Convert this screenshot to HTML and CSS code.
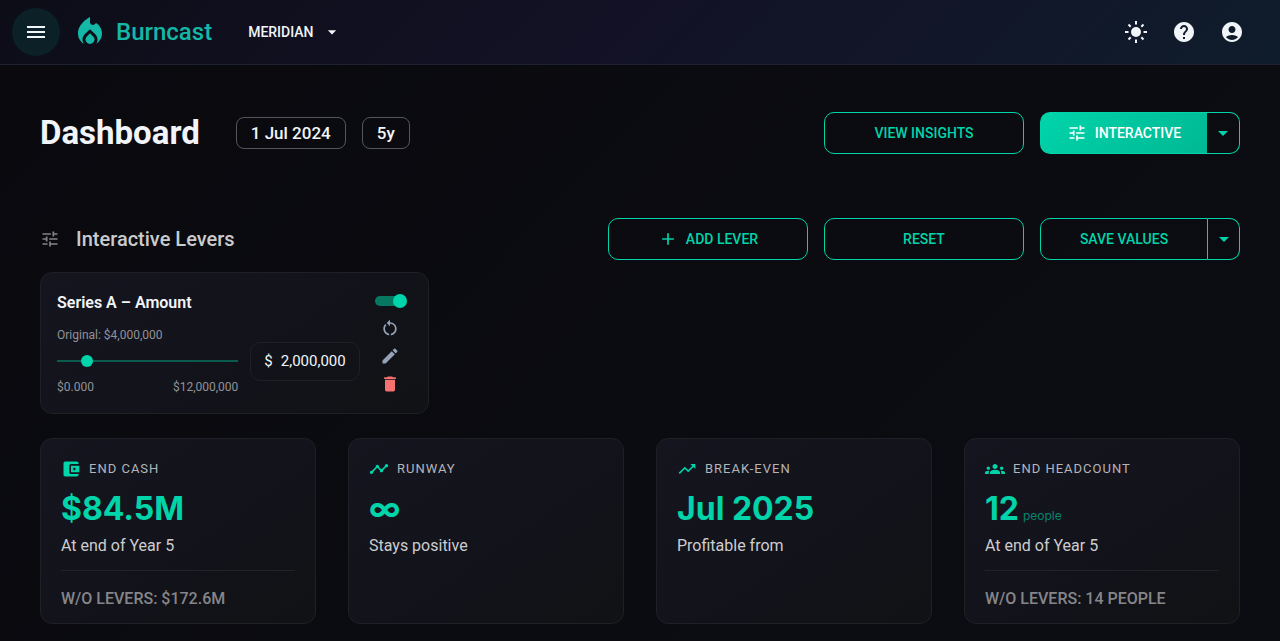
FILE: index.html
```
<!DOCTYPE html>
<html lang="en">
<head>
<meta charset="utf-8">
<meta name="viewport" content="width=device-width, initial-scale=1">
<title>Burncast – Dashboard</title>
<link rel="stylesheet" href="styles.css">
</head>
<body>
<header class="topbar">
  <button class="round menu" type="button" aria-label="Menu"><svg class="i24" viewBox="0 0 24 24"><path d="M3 18h18v-2H3v2zm0-5h18v-2H3v2zm0-7v2h18V6H3z"/></svg></button>
  <a class="brand" href="#">
    <svg class="flame" viewBox="0 0 24 24"><path d="m12 12.9-2.130 2.090c-.56.56-.87 1.290-.87 2.070C9 18.680 10.350 20 12 20s3-1.320 3-2.940c0-.78-.31-1.520-.87-2.070L12 12.900z"/><path d="m16 6-.44.55C14.380 8.020 12 7.190 12 5.300V2S4 6 4 13c0 2.920 1.560 5.470 3.890 6.860-.56-.79-.89-1.760-.89-2.800 0-1.320.52-2.560 1.470-3.500L12 10.100l3.530 3.470c.95.93 1.470 2.170 1.470 3.500 0 1.020-.31 1.960-.85 2.750 1.890-1.150 3.290-3.060 3.710-5.300.66-3.550-1.070-6.900-3.860-8.520z"/></svg>
    <span>Burncast</span>
  </a>
  <button class="company" type="button">MERIDIAN <svg class="i20" viewBox="0 0 24 24"><path d="m7 10 5 5 5-5z"/></svg></button>
  <nav class="tools" aria-label="Account">
    <button class="round" type="button" aria-label="Light mode"><svg class="i24" viewBox="0 0 24 24"><circle cx="12" cy="12" r="5"/><path class="rays" d="M12 1v3.500M12 19.500V23M1 12h3.500M19.500 12H23M4.500 4.500l2.200 2.200M17.300 17.300l2.200 2.200M4.500 19.500l2.200-2.200M17.300 6.700l2.200-2.200"/></svg></button>
    <button class="round" type="button" aria-label="Help"><svg class="i24" viewBox="0 0 24 24"><path d="M12 2C6.480 2 2 6.480 2 12s4.480 10 10 10 10-4.480 10-10S17.520 2 12 2zm1 17h-2v-2h2v2zm2.070-7.750-.9.92C13.450 12.900 13 13.500 13 15h-2v-.5c0-1.100.45-2.100 1.170-2.830l1.240-1.260c.37-.36.59-.86.59-1.410 0-1.100-.9-2-2-2s-2 .9-2 2H8c0-2.210 1.790-4 4-4s4 1.790 4 4c0 .88-.36 1.680-.93 2.250z"/></svg></button>
    <button class="round" type="button" aria-label="Account"><svg class="i24" viewBox="0 0 24 24"><path d="M12 2C6.480 2 2 6.480 2 12s4.480 10 10 10 10-4.480 10-10S17.520 2 12 2zm0 4c1.930 0 3.500 1.570 3.500 3.500S13.930 13 12 13s-3.500-1.570-3.500-3.500S10.070 6 12 6zm0 14c-2.030 0-4.430-.82-6.140-2.880C7.550 15.800 9.680 15 12 15s4.450.8 6.140 2.120C16.430 19.180 14.030 20 12 20z"/></svg></button>
  </nav>
</header>

<main class="page">
  <section class="row">
    <div class="heading">
      <h1>Dashboard</h1>
      <button class="chip" type="button">1 Jul 2024</button>
      <button class="chip" type="button">5y</button>
    </div>
    <div class="actions">
      <button class="btn" type="button">VIEW INSIGHTS</button>
      <div class="split">
        <button class="btn filled" type="button"><svg class="i20" viewBox="0 0 24 24"><path d="M3 17v2h6v-2H3zM3 5v2h10V5H3zm10 16v-2h8v-2h-8v-2h-2v6h2zM7 9v2H3v2h4v2h2V9H7zm14 4v-2H11v2h10zm-6-4h2V7h4V5h-4V3h-2v6z"/></svg>INTERACTIVE</button>
        <button class="btn caret" type="button" aria-label="More modes"><svg class="i24" viewBox="0 0 24 24"><path d="m7 10 5 5 5-5z"/></svg></button>
      </div>
    </div>
  </section>

  <section class="levers">
    <div class="row">
      <h2><svg class="i20" viewBox="0 0 24 24"><path d="M3 17v2h6v-2H3zM3 5v2h10V5H3zm10 16v-2h8v-2h-8v-2h-2v6h2zM7 9v2H3v2h4v2h2V9H7zm14 4v-2H11v2h10zm-6-4h2V7h4V5h-4V3h-2v6z"/></svg>Interactive Levers</h2>
      <div class="actions">
        <button class="btn" type="button"><svg class="i20" viewBox="0 0 24 24"><path d="M19 13h-6v6h-2v-6H5v-2h6V5h2v6h6v2z"/></svg>ADD LEVER</button>
        <button class="btn" type="button">RESET</button>
        <div class="split">
          <button class="btn" type="button">SAVE VALUES</button>
          <button class="btn caret" type="button" aria-label="More save options"><svg class="i24" viewBox="0 0 24 24"><path d="m7 10 5 5 5-5z"/></svg></button>
        </div>
      </div>
    </div>

    <div class="lever-grid">
      <article class="card lever">
        <div class="lever-main">
          <h3 id="lever-name">Series A – Amount</h3>
          <div class="lever-controls">
            <div class="range">
              <label for="amount-range">Original: $4,000,000</label>
              <input class="slider" id="amount-range" type="range" min="0" max="12000000" value="2000000">
              <div class="limits"><span>$0.000</span><span>$12,000,000</span></div>
            </div>
            <label class="amount"><span>$</span><input type="text" value="2,000,000" aria-labelledby="lever-name"></label>
          </div>
        </div>
        <div class="lever-tools">
          <input class="switch" type="checkbox" checked aria-label="Lever enabled">
          <button type="button" aria-label="Restore"><svg class="i20" viewBox="0 0 24 24"><path d="M12 5V2L8 6l4 4V7c3.310 0 6 2.690 6 6 0 2.970-2.170 5.430-5 5.910v2.020c3.950-.49 7-3.850 7-7.930 0-4.420-3.580-8-8-8zm-6 8c0-1.650.67-3.150 1.760-4.240L6.340 7.340C4.900 8.790 4 10.790 4 13c0 4.080 3.050 7.440 7 7.930v-2.020c-2.830-.48-5-2.940-5-5.910z"/></svg></button>
          <button type="button" aria-label="Edit"><svg class="i20" viewBox="0 0 24 24"><path d="M3 17.250V21h3.750L17.810 9.940l-3.750-3.750L3 17.250zM20.710 7.040c.39-.39.39-1.020 0-1.410l-2.340-2.340c-.39-.39-1.020-.39-1.410 0l-1.830 1.830 3.750 3.750 1.830-1.830z"/></svg></button>
          <button class="danger" type="button" aria-label="Delete"><svg class="i20" viewBox="0 0 24 24"><path d="M6 19c0 1.100.9 2 2 2h8c1.100 0 2-.9 2-2V7H6v12zM19 4h-3.500l-1-1h-5l-1 1H5v2h14V4z"/></svg></button>
        </div>
      </article>
    </div>
  </section>

  <section class="stats">
    <article class="card stat">
      <h3><svg class="i20" viewBox="0 0 24 24"><path d="M21 18v1c0 1.100-.9 2-2 2H5c-1.110 0-2-.9-2-2V5c0-1.100.89-2 2-2h14c1.100 0 2 .9 2 2v1h-9c-1.110 0-2 .9-2 2v8c0 1.100.89 2 2 2h9zm-9-2h10V8H12v8zm4-2.500c-.83 0-1.500-.67-1.500-1.500s.67-1.500 1.500-1.500 1.500.67 1.500 1.500-.67 1.500-1.500 1.500z"/></svg>END CASH</h3>
      <p class="value">$84.5M</p>
      <p class="note">At end of Year 5</p>
      <p class="without">W/O LEVERS: $172.6M</p>
    </article>
    <article class="card stat">
      <h3><svg class="i20" viewBox="0 0 24 24"><path d="M23 8c0 1.100-.9 2-2 2-.18 0-.35-.02-.51-.07l-3.560 3.550c.05.16.07.34.07.52 0 1.100-.9 2-2 2s-2-.9-2-2c0-.18.02-.36.07-.52l-2.550-2.550c-.16.05-.34.07-.52.07s-.36-.02-.52-.07l-4.550 4.560c.05.16.07.33.07.51 0 1.100-.9 2-2 2s-2-.9-2-2 .9-2 2-2c.18 0 .35.02.51.07l4.560-4.550C8.020 9.360 8 9.180 8 9c0-1.100.9-2 2-2s2 .9 2 2c0 .18-.02.36-.07.52l2.550 2.550c.16-.05.34-.07.52-.07s.36.02.52.07l3.550-3.560C19.020 8.350 19 8.180 19 8c0-1.100.9-2 2-2s2 .9 2 2z"/></svg>RUNWAY</h3>
      <p class="value">∞</p>
      <p class="note">Stays positive</p>
    </article>
    <article class="card stat">
      <h3><svg class="i20" viewBox="0 0 24 24"><path d="m16 6 2.290 2.290-4.880 4.880-4-4L2 16.590 3.410 18l6-6 4 4 6.300-6.290L22 12V6z"/></svg>BREAK-EVEN</h3>
      <p class="value">Jul 2025</p>
      <p class="note">Profitable from</p>
    </article>
    <article class="card stat">
      <h3><svg class="i20" viewBox="0 0 24 24"><path d="M12 12.750c1.630 0 3.070.39 4.240.9 1.080.48 1.760 1.560 1.760 2.730V18H6v-1.610c0-1.180.68-2.260 1.760-2.730 1.170-.52 2.610-.91 4.240-.91zM4 13c1.100 0 2-.9 2-2s-.9-2-2-2-2 .9-2 2 .9 2 2 2zm1.130 1.100c-.37-.06-.74-.1-1.130-.1-.99 0-1.930.21-2.780.58C.48 14.900 0 15.620 0 16.430V18h4.500v-1.610c0-.83.23-1.610.63-2.290zM20 13c1.100 0 2-.9 2-2s-.9-2-2-2-2 .9-2 2 .9 2 2 2zm4 3.430c0-.81-.48-1.530-1.220-1.850-.85-.37-1.790-.58-2.780-.58-.39 0-.76.04-1.130.1.4.68.63 1.460.63 2.290V18H24v-1.570zM12 6c1.660 0 3 1.340 3 3s-1.340 3-3 3-3-1.340-3-3 1.340-3 3-3z"/></svg>END HEADCOUNT</h3>
      <p class="value">12 <small>people</small></p>
      <p class="note">At end of Year 5</p>
      <p class="without">W/O LEVERS: 14 PEOPLE</p>
    </article>
  </section>
</main>
</body>
</html>
```
FILE: styles.css
```
:root {
  --accent: #00d4aa;
  --text: #f1f5f9;
}

* { box-sizing: border-box; }

body {
  margin: 0;
  min-height: 100vh;
  background: linear-gradient(135deg, #09090e, #0c0d12);
  color: var(--text);
  font-family: Roboto, sans-serif;
  font-size: 16px;
  line-height: 24px;
}

h1, h2, h3, p { margin: 0; }

button, input { font: inherit; color: inherit; }

button {
  padding: 0;
  border: 0;
  background: none;
  cursor: pointer;
}

svg { display: block; flex: none; fill: currentColor; }
.i20 { width: 20px; height: 20px; }
.i24 { width: 24px; height: 24px; }

/* Top bar */
.topbar {
  display: flex;
  align-items: center;
  padding: 8px 24px 8px 12px;
  border-bottom: 1px solid #1e2130;
  background: linear-gradient(135deg, #0d0d18, #131226 50%, #0f1c2b);
}

.round {
  display: grid;
  place-items: center;
  width: 48px;
  height: 48px;
  border-radius: 50%;
}

.menu { background: #0b2027; }

.rays { fill: none; stroke: currentColor; stroke-width: 2; }

.brand {
  display: flex;
  align-items: center;
  gap: 8px;
  margin-left: 12px;
  color: #14b8a6;
  font-size: 24px;
  font-weight: 500;
  text-decoration: none;
}

.flame { width: 36px; height: 36px; }

.company {
  display: flex;
  align-items: center;
  gap: 8px;
  margin-left: 36px;
  font-size: 14px;
  font-weight: 500;
}

.tools { display: flex; margin-left: auto; }

/* Page */
.page {
  display: flex;
  flex-direction: column;
  padding: 47px 40px 16px;
}

.row {
  display: flex;
  align-items: center;
  justify-content: space-between;
  gap: 16px;
}

.heading { display: flex; align-items: center; gap: 16px; }

h1 {
  margin-right: 20px;
  font-size: 33px;
  font-weight: 700;
  line-height: 40px;
}

.chip {
  height: 32px;
  padding: 0 14px;
  border: 1px solid #55565b;
  border-radius: 8px;
  font-size: 17px;
  font-weight: 500;
}

.actions { display: flex; gap: 16px; }

.btn {
  display: flex;
  align-items: center;
  justify-content: center;
  gap: 8px;
  width: 200px;
  height: 42px;
  border: 1px solid var(--accent);
  border-radius: 10px;
  color: var(--accent);
  font-size: 14px;
  font-weight: 500;
}

.split { display: flex; width: 200px; }
.split .btn { flex: 1; border-radius: 10px 0 0 10px; }
.split .caret { flex: 0 0 32px; border-left: 0; border-radius: 0 10px 10px 0; }
.split .filled {
  border-right: 0;
  background: linear-gradient(135deg, #00d4aa, #00b894);
  color: #ffffff;
}
.split .filled + .caret { flex-basis: 33px; }

/* Levers */
.levers { margin-top: 64px; }

h2 {
  display: flex;
  align-items: center;
  gap: 16px;
  color: #cbcbcd;
  font-size: 20px;
  font-weight: 500;
}

h2 svg { color: #858589; }

.lever-grid {
  display: grid;
  grid-template-columns: repeat(3, 1fr);
  gap: 16px;
  margin-top: 12px;
}

.card {
  border: 1px solid #1f2026;
  border-radius: 12px;
  background: linear-gradient(145deg, #15151f, #12131b 50%, #111214);
}

.lever {
  display: flex;
  justify-content: space-between;
  gap: 12px;
  padding: 16px;
}

.lever-main { flex: 1; min-width: 0; }

.lever h3 {
  padding: 2px 0;
  font-size: 16px;
  font-weight: 600;
  line-height: 24px;
}

.lever-controls { display: flex; align-items: center; gap: 12px; margin-top: 8px; }

.range {
  flex: 1;
  min-width: 0;
  color: #929297;
  font-size: 12px;
  line-height: 20px;
}

.range label { display: block; }

.slider {
  display: block;
  width: calc(100% + 12px);
  height: 32px;
  margin: 0 -6px;
  background: linear-gradient(#0b5a4e, #0b5a4e) center / calc(100% - 12px) 2px no-repeat;
  appearance: none;
}

.slider::-webkit-slider-thumb {
  width: 12px;
  height: 12px;
  border-radius: 50%;
  background: var(--accent);
  appearance: none;
}

.limits { display: flex; justify-content: space-between; }

.amount {
  display: flex;
  align-items: center;
  gap: 8px;
  width: 110px;
  height: 39px;
  padding: 0 12px 0 13px;
  border: 1px solid #1f2026;
  border-radius: 10px;
  font-size: 15px;
}

.amount input {
  flex: 1;
  min-width: 0;
  padding: 0;
  border: 0;
  outline: 0;
  background: none;
}

.lever-tools {
  display: flex;
  flex-direction: column;
  align-items: center;
  gap: 8px;
  width: 36px;
  margin-right: 4px;
  padding-top: 5px;
  color: #94a3b8;
}

.lever-tools .danger { color: #f87171; }

.switch {
  position: relative;
  width: 32px;
  height: 14px;
  margin: 0 0 2px 2px;
  appearance: none;
}

.switch::before {
  content: "";
  position: absolute;
  inset: 2px 2px 2px 0;
  border-radius: 5px;
  background: #067862;
}

.switch::after {
  content: "";
  position: absolute;
  top: 0;
  right: 0;
  width: 14px;
  height: 14px;
  border-radius: 50%;
  background: var(--accent);
}

/* Statistics */
.stats {
  display: grid;
  grid-template-columns: repeat(4, 1fr);
  gap: 32px;
  margin-top: 24px;
}

.stat { padding: 20px 20px 12px; }

.stat h3 {
  display: flex;
  align-items: center;
  gap: 8px;
  color: #b4b5b9;
  font-size: 13px;
  font-weight: 400;
  line-height: 20px;
  letter-spacing: 1px;
}

.stat h3 svg { color: var(--accent); }

.value {
  display: flex;
  align-items: baseline;
  gap: 4px;
  margin-top: 10px;
  color: var(--accent);
  font-family: Inter, sans-serif;
  font-size: 32px;
  font-weight: 700;
  line-height: 40px;
}

.value small {
  color: #07846c;
  font-size: 12px;
  font-weight: 400;
  line-height: 16px;
}

.note { margin-top: 5px; color: #cdcdcf; }

.without {
  margin-top: 12px;
  padding-top: 16px;
  border-top: 1px solid #222329;
  color: #86868a;
  font-weight: 500;
}
```
